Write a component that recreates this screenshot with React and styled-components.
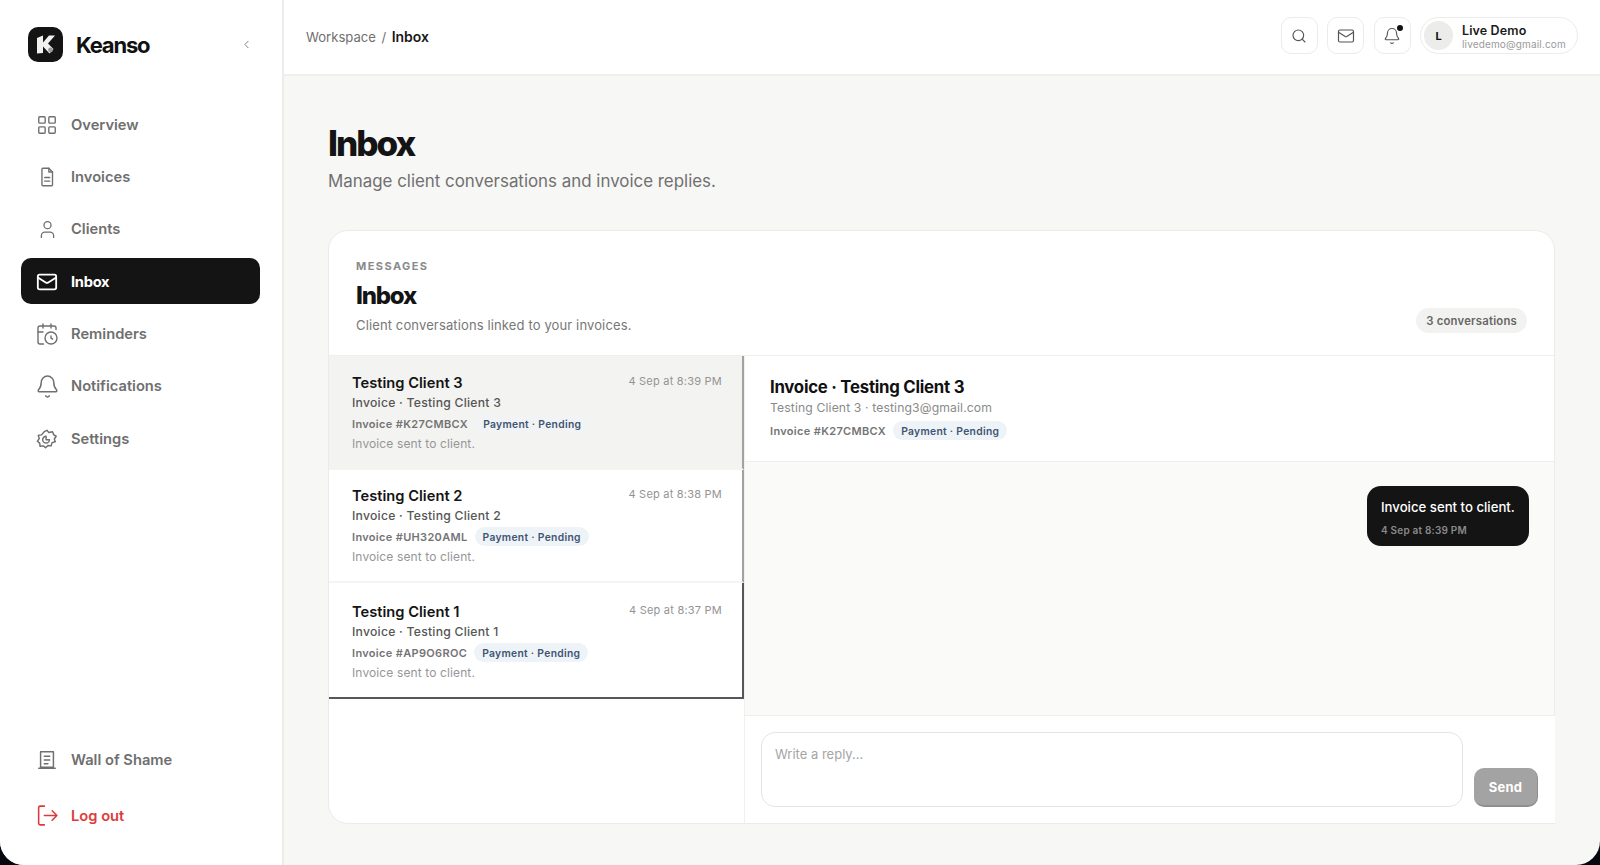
import React from 'react';
import styled, { createGlobalStyle } from 'styled-components';
import { LayoutGrid, User, Mail, CalendarClock, Bell, ChevronLeft, Search } from 'lucide-react';

const Global = createGlobalStyle`
  html, body { margin: 0; padding: 0; height: 100%; background: #070710; }
  #root { height: 865px; }
  * { box-sizing: border-box; }
  body { font-family: Inter, "Liberation Sans", sans-serif; -webkit-font-smoothing: antialiased; }
`;

const Shell = styled.div`
  display: flex;
  width: 1600px;
  height: 865px;
  background: #f7f7f5;
  border-radius: 0 0 24px 24px;
  overflow: hidden;
`;

const Sidebar = styled.aside`
  width: 284px;
  flex: none;
  background: #fff;
  border-right: 2px solid #ececea;
  display: flex;
  flex-direction: column;
  padding: 27px 22px 27px 21px;
`;

const Brand = styled.div`
  display: flex;
  align-items: center;
  padding-left: 7px;
  height: 35px;
  margin-bottom: 39px;
`;

const BrandName = styled.span`
  font-size: 22px;
  font-weight: 700;
  letter-spacing: -0.055em;
  color: #111;
  margin-left: 13px;
  flex: 1;
`;

const Collapse = styled.span`
  display: flex;
  color: #777;
  margin-right: 7px;
`;

const NavList = styled.nav`
  display: flex;
  flex-direction: column;
  gap: 6.4px;
  flex: 1;
`;

const NavItem = styled.div`
  display: flex;
  align-items: center;
  gap: 14px;
  height: 46px;
  padding: 1px 0 0 16px;
  border-radius: 10px;
  font-size: 14.7px;
  color: ${p => (p.$active ? '#fff' : '#6f6f6f')};
  background: ${p => (p.$active ? '#141414' : 'transparent')};
  font-weight: ${p => (p.$active ? 700 : 600)};
  letter-spacing: ${p => (p.$active ? '-0.02em' : '0')};
`;

const FootItem = styled(NavItem)`
  color: ${p => (p.$danger ? '#dc3a3a' : '#6f6f6f')};
`;

const FootList = styled.div`
  display: flex;
  flex-direction: column;
  gap: 10px;
`;

const IconSlot = styled.span`
  width: 20px;
  height: 22px;
  display: flex;
  align-items: center;
  justify-content: center;
  flex: none;
  svg { flex: none; }
`;

const Main = styled.main`
  flex: 1;
  min-width: 0;
  display: flex;
  flex-direction: column;
`;

const Topbar = styled.header`
  height: 76px;
  flex: none;
  background: #fff;
  border-bottom: 2px solid #efefed;
  display: flex;
  align-items: center;
  padding: 0 22px 3px 22px;
`;

const Crumbs = styled.div`
  display: flex;
  align-items: baseline;
  gap: 5.5px;
  font-size: 13.1px;
  color: #6f6f6f;
  flex: 1;
  margin-top: 1px;
`;

const CrumbNow = styled.span`
  color: #1a1a1a;
  font-size: 14px;
  font-weight: 600;
`;

const IconButton = styled.button`
  position: relative;
  width: 37px;
  height: 37px;
  margin-right: 9.5px;
  border-radius: 10px;
  background: #fff;
  border: 1px solid #ebebe9;
  display: flex;
  align-items: center;
  justify-content: center;
  padding: 0;
  color: #555;
`;

const Dot = styled.span`
  position: absolute;
  top: 7px;
  right: 7px;
  width: 6px;
  height: 6px;
  border-radius: 50%;
  background: #111;
`;

const Profile = styled.div`
  width: 158px;
  height: 37px;
  border-radius: 19px;
  border: 1px solid #ebebe9;
  display: flex;
  align-items: center;
  padding-left: 3px;
  gap: 9px;
`;

const Avatar = styled.span`
  width: 29px;
  height: 29px;
  border-radius: 50%;
  background: #ececea;
  display: flex;
  align-items: center;
  justify-content: center;
  font-size: 11px;
  font-weight: 700;
  color: #111;
`;

const ProfileText = styled.div`
  display: flex;
  flex-direction: column;
  padding-top: 3px;
`;

const ProfileName = styled.span`
  font-size: 12.5px;
  font-weight: 600;
  line-height: 14px;
  color: #1a1a1a;
  letter-spacing: 0.01em;
`;

const ProfileMail = styled.span`
  font-size: 10px;
  line-height: 13px;
  color: #9a9a9a;
  letter-spacing: 0.015em;
`;

const Content = styled.div`
  flex: 1;
  min-height: 0;
  display: flex;
  flex-direction: column;
  padding: 47px 45px 41px 44px;
`;

const PageTitle = styled.h1`
  margin: 0;
  font-size: 35px;
  line-height: 40px;
  font-weight: 800;
  letter-spacing: -0.057em;
  color: #141414;
`;

const PageSub = styled.p`
  margin: 6px 0 0;
  font-size: 16.9px;
  line-height: 24px;
  color: #707070;
`;

const Card = styled.section`
  margin-top: 37px;
  flex: 1;
  min-height: 0;
  background: #fff;
  border: 1px solid #ebebe9;
  border-radius: 20px;
  display: flex;
  flex-direction: column;
`;

const CardHead = styled.div`
  height: 125px;
  flex: none;
  border-bottom: 1px solid #efefed;
  padding: 28px 27px 0 27px;
  display: flex;
  justify-content: space-between;
`;

const Eyebrow = styled.div`
  font-size: 11px;
  line-height: 14px;
  font-weight: 700;
  letter-spacing: 0.13em;
  color: #8a8a8a;
`;

const CardTitle = styled.h2`
  margin: 8px 0 0;
  font-size: 24px;
  line-height: 30px;
  font-weight: 800;
  letter-spacing: -0.05em;
  color: #141414;
`;

const CardSub = styled.p`
  margin: 5px 0 0;
  font-size: 13px;
  line-height: 18px;
  color: #777;
  letter-spacing: 0.01em;
`;

const CountPill = styled.span`
  align-self: flex-end;
  margin: 0 0 22px;
  height: 25px;
  padding: 0 10px;
  border-radius: 13px;
  background: #f2f2f0;
  font-size: 11.3px;
  font-weight: 600;
  letter-spacing: 0.02em;
  color: #666;
  display: flex;
  align-items: center;
`;

const Split = styled.div`
  flex: 1;
  min-height: 0;
  display: flex;
`;

const ThreadList = styled.div`
  width: 415px;
  flex: none;
  display: flex;
  flex-direction: column;
`;

const Thread = styled.div`
  height: ${p => p.$h}px;
  padding: ${p => p.$pt}px 20px 0 23px;
  background: ${p => (p.$selected ? '#f3f3f1' : '#fff')};
  border-right: 2px solid ${p => (p.$last ? '#55575a' : '#a2a2a2')};
  border-bottom: ${p => (p.$last ? '2px solid #55575a' : '2px solid #f4f4f2')};
`;

const ThreadTop = styled.div`
  display: flex;
  justify-content: space-between;
  align-items: flex-start;
`;

const ThreadName = styled.span`
  font-size: 14.7px;
  line-height: 20px;
  font-weight: 600;
  color: #141414;
`;

const ThreadTime = styled.span`
  font-size: 11px;
  line-height: 17px;
  color: #939393;
  letter-spacing: 0.02em;
`;

const ThreadSubject = styled.div`
  font-size: 12.2px;
  line-height: 20px;
  font-weight: 500;
  color: #555;
  letter-spacing: 0.02em;
`;

const MetaRow = styled.div`
  display: flex;
  align-items: center;
  gap: 7px;
  height: 21px;
`;

const InvoiceRef = styled.span`
  font-size: 11px;
  font-weight: 600;
  color: #747474;
  letter-spacing: 0.03em;
`;

const StatusPill = styled.span`
  height: 19px;
  padding: 0 8px;
  border-radius: 10px;
  background: ${p => (p.$faint ? '#f1f3f4' : '#eef3f8')};
  color: #3f5573;
  font-size: 10.3px;
  font-weight: 600;
  letter-spacing: 0.03em;
  display: flex;
  align-items: center;
`;

const ThreadPreview = styled.div`
  font-size: 12px;
  line-height: 20px;
  color: #969696;
  letter-spacing: 0.01em;
`;

const Detail = styled.div`
  flex: 1;
  min-width: 0;
  display: flex;
  flex-direction: column;
  border-left: 1px solid #f0f0ee;
`;

const DetailHead = styled.div`
  height: 106px;
  flex: none;
  padding: 20px 25px 0;
  border-bottom: 1px solid #efefed;
`;

const DetailTitle = styled.h3`
  margin: 0;
  font-size: 16.8px;
  line-height: 22px;
  font-weight: 700;
  letter-spacing: -0.015em;
  color: #111;
`;

const DetailSub = styled.div`
  margin-top: 1px;
  font-size: 12.2px;
  line-height: 18px;
  color: #8a8a8a;
  letter-spacing: 0.01em;
`;

const DetailMeta = styled(MetaRow)`
  margin-top: 3px;
`;

const Messages = styled.div`
  flex: 1;
  min-height: 0;
  background: #fafaf8;
  padding: 24px 25px;
  display: flex;
  justify-content: flex-end;
  align-items: flex-start;
`;

const Bubble = styled.div`
  background: #141414;
  border-radius: 14px;
  padding: 12px 14px 0;
  width: 162px;
  height: 60px;
`;

const BubbleText = styled.div`
  font-size: 13.2px;
  line-height: 18px;
  font-weight: 500;
  color: #fff;
  white-space: nowrap;
`;

const BubbleTime = styled.div`
  margin-top: 7px;
  font-size: 10px;
  line-height: 14px;
  font-weight: 600;
  color: #8a8a8a;
  letter-spacing: 0.02em;
`;

const Composer = styled.div`
  height: 109px;
  flex: none;
  background: #fff;
  border-top: 1px solid #efefed;
  padding: 16px 17px 16px 16px;
  display: flex;
  align-items: flex-end;
  gap: 11px;
  margin-bottom: -1px;
  margin-right: -1px;
  border-bottom: 1px solid #ebebe9;
`;

const Reply = styled.div`
  flex: 1;
  height: 75px;
  border: 1px solid #e4e4e2;
  border-radius: 14px;
  padding: 13px 13px;
  font-size: 13px;
  line-height: 17px;
  color: #a5a5a5;
`;

const SendButton = styled.button`
  width: 64px;
  height: 39px;
  border: 0;
  border-right: 1px solid #8f8f8f;
  border-bottom: 2px solid #8f8f8f;
  border-radius: 10px;
  background: #a3a3a3;
  color: #fff;
  font: 700 13px Inter, "Liberation Sans", sans-serif;
  letter-spacing: 0.02em;
`;

const LogoTile = () => (
  <svg width="35" height="35" viewBox="0 0 35 35" style={{ flex: 'none' }}>
    <rect width="35" height="35" rx="10" fill="#141414" />
    <path d="M9 11 L15 8.5 V15.5 L21 8.5 L27 8.5 L20 16.5 L25.5 22 L21.5 26.5 L15 19.5 V26 L9 26.5 Z" fill="#f1f1ef" />
    <circle cx="22.5" cy="23" r="2.4" fill="#9c9c9c" />
  </svg>
);

const SmallIcon = ({ size = 20, children, stroke = '#6f6f6f', sw = 1.5 }) => (
  <svg width={size} height={size} viewBox="0 0 24 24" fill="none" stroke={stroke} strokeWidth={sw} strokeLinecap="round" strokeLinejoin="round">
    {children}
  </svg>
);

const DocIcon = () => (
  <SmallIcon size={22} sw={1.5}>
    <path d="M6.5 3.5 A1 1 0 0 1 7.5 2.5 H14 L18 6.5 V20.5 A1 1 0 0 1 17 21.5 H7.5 A1 1 0 0 1 6.5 20.5 Z" />
    <path d="M14 2.5 V6.5 H18" />
    <path d="M9.5 12.5 H15 M9.5 16.5 H15" />
  </SmallIcon>
);

const GearIcon = () => (
  <SmallIcon size={22} sw={1.6}>
    <path d="M9 4 L12 2.5 L14 5 L18 4 L19.5 7.5 L22 9 L20 12 L21 15 L17.5 16 L16.5 19.5 L13 19 L10.5 21.5 L8 19.5 L4.5 20 L4 16.5 L1.5 14.5 L3.5 11.5 L2.5 8 L6 7.5 Z" />
    <path d="M11 9 A3.7 3.7 0 1 0 14.7 12.7 L11 12.7 Z" />
  </SmallIcon>
);

const ShameIcon = () => (
  <SmallIcon size={22} sw={1.6}>
    <path d="M5 3h14v17H5z" />
    <path d="M3 21h18" />
    <path d="M9 8h6M9 12h6M9 16h4" />
  </SmallIcon>
);

const LogoutIcon = () => (
  <SmallIcon size={25} stroke="#dc3a3a" sw={1.5}>
    <path d="M9 3H5a1.5 1.5 0 0 0-1.5 1.5v15A1.5 1.5 0 0 0 5 21h4" />
    <path d="M9 12h12M16.5 7.5 21 12l-4.5 4.5" />
  </SmallIcon>
);

const nav = [
  ['Overview', <LayoutGrid size={22} strokeWidth={1.5} color="#6f6f6f" />],
  ['Invoices', <DocIcon />],
  ['Clients', <User size={21} strokeWidth={1.5} color="#6f6f6f" />],
  ['Inbox', <Mail size={22} strokeWidth={2} color="#fff" />, true],
  ['Reminders', <CalendarClock size={24} strokeWidth={1.4} color="#6f6f6f" />],
  ['Notifications', <Bell size={25} strokeWidth={1.4} color="#6f6f6f" />],
  ['Settings', <GearIcon />],
];

const threads = [
  { name: 'Testing Client 3', time: '4 Sep at 8:39 PM', ref: 'K27CMBCX', selected: true, h: 114, pt: 17 },
  { name: 'Testing Client 2', time: '4 Sep at 8:38 PM', ref: 'UH320AML', h: 113, pt: 16 },
  { name: 'Testing Client 1', time: '4 Sep at 8:37 PM', ref: 'AP9O6ROC', last: true, h: 116, pt: 19 },
];

export default function App() {
  return (
    <>
      <Global />
      <Shell>
        <Sidebar>
          <Brand>
            <LogoTile />
            <BrandName>Keanso</BrandName>
            <Collapse><ChevronLeft size={13} strokeWidth={1.75} /></Collapse>
          </Brand>
          <NavList>
            {nav.map(([label, icon, active]) => (
              <NavItem key={label} $active={active}>
                <IconSlot>{icon}</IconSlot>
                {label}
              </NavItem>
            ))}
          </NavList>
          <FootList>
            <FootItem><IconSlot><ShameIcon /></IconSlot>Wall of Shame</FootItem>
            <FootItem $danger><IconSlot><LogoutIcon /></IconSlot>Log out</FootItem>
          </FootList>
        </Sidebar>
        <Main>
          <Topbar>
            <Crumbs>
              <span>Workspace</span>
              <span>/</span>
              <CrumbNow>Inbox</CrumbNow>
            </Crumbs>
            <IconButton><Search size={16} strokeWidth={1.75} /></IconButton>
            <IconButton><Mail size={18} strokeWidth={1.6} /></IconButton>
            <IconButton><Bell size={18} strokeWidth={1.5} /><Dot /></IconButton>
            <Profile>
              <Avatar>L</Avatar>
              <ProfileText>
                <ProfileName>Live Demo</ProfileName>
                <ProfileMail>livedemo@gmail.com</ProfileMail>
              </ProfileText>
            </Profile>
          </Topbar>
          <Content>
            <PageTitle>Inbox</PageTitle>
            <PageSub>Manage client conversations and invoice replies.</PageSub>
            <Card>
              <CardHead>
                <div>
                  <Eyebrow>MESSAGES</Eyebrow>
                  <CardTitle>Inbox</CardTitle>
                  <CardSub>Client conversations linked to your invoices.</CardSub>
                </div>
                <CountPill>3 conversations</CountPill>
              </CardHead>
              <Split>
                <ThreadList>
                  {threads.map(t => (
                    <Thread key={t.name} $selected={t.selected} $last={t.last} $h={t.h} $pt={t.pt}>
                      <ThreadTop>
                        <ThreadName>{t.name}</ThreadName>
                        <ThreadTime>{t.time}</ThreadTime>
                      </ThreadTop>
                      <ThreadSubject>Invoice · {t.name}</ThreadSubject>
                      <MetaRow>
                        <InvoiceRef>Invoice #{t.ref}</InvoiceRef>
                        <StatusPill $faint={t.selected}>Payment · Pending</StatusPill>
                      </MetaRow>
                      <ThreadPreview>Invoice sent to client.</ThreadPreview>
                    </Thread>
                  ))}
                </ThreadList>
                <Detail>
                  <DetailHead>
                    <DetailTitle>Invoice · Testing Client 3</DetailTitle>
                    <DetailSub>Testing Client 3 · testing3@gmail.com</DetailSub>
                    <DetailMeta>
                      <InvoiceRef>Invoice #K27CMBCX</InvoiceRef>
                      <StatusPill>Payment · Pending</StatusPill>
                    </DetailMeta>
                  </DetailHead>
                  <Messages>
                    <Bubble>
                      <BubbleText>Invoice sent to client.</BubbleText>
                      <BubbleTime>4 Sep at 8:39 PM</BubbleTime>
                    </Bubble>
                  </Messages>
                  <Composer>
                    <Reply>Write a reply...</Reply>
                    <SendButton>Send</SendButton>
                  </Composer>
                </Detail>
              </Split>
            </Card>
          </Content>
        </Main>
      </Shell>
    </>
  );
}
